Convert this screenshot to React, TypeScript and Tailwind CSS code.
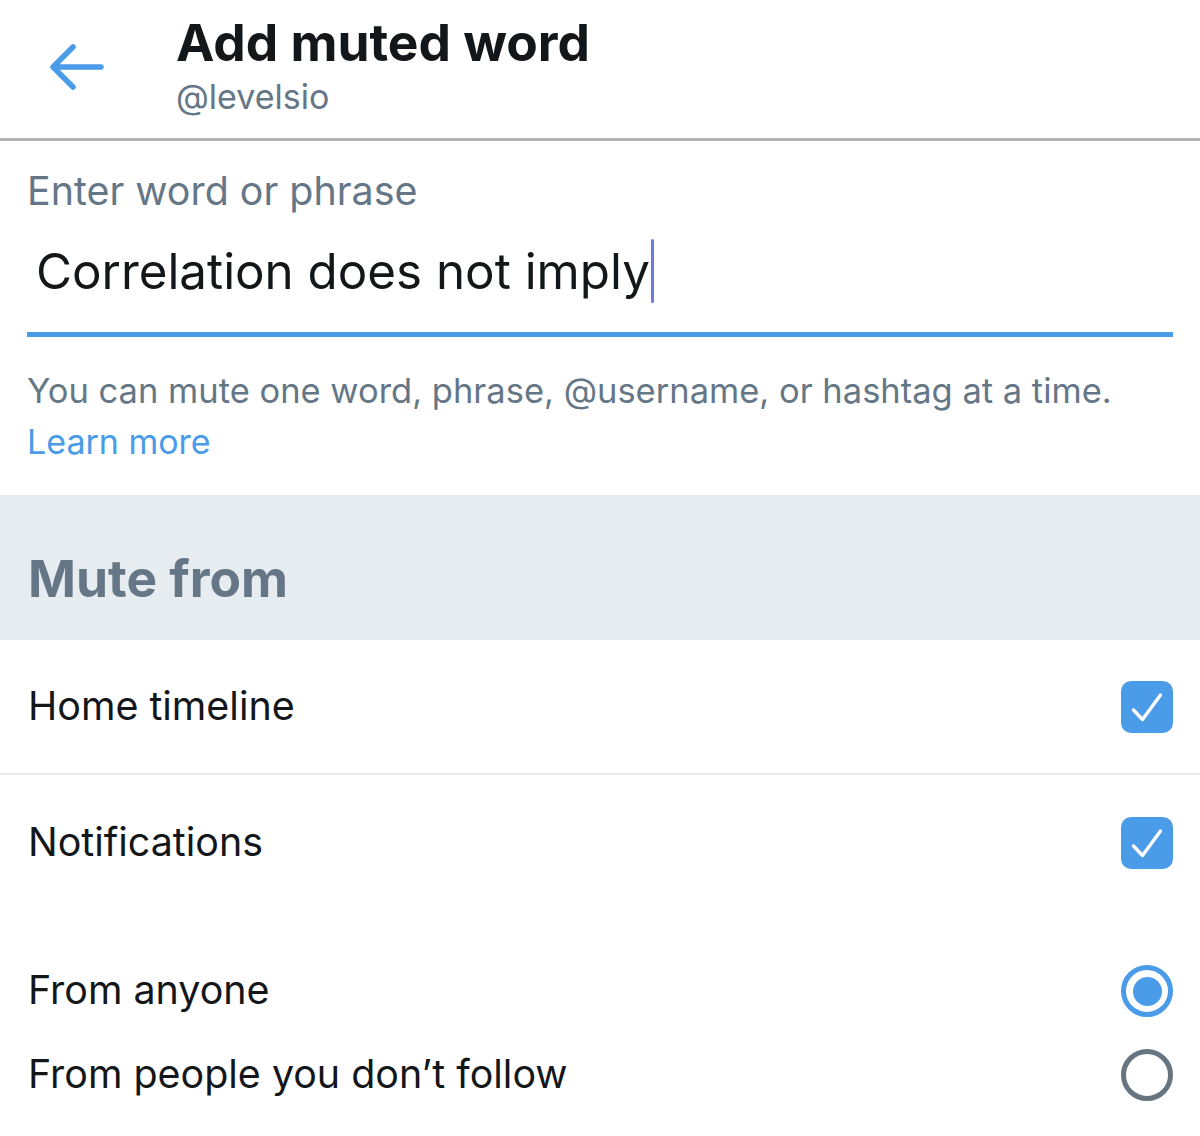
function BackArrow() {
  return (
    <svg viewBox="0 0 60 50" className="h-[50px] w-[60px]" fill="none">
      <path d="M6 25 H54 M26 5 L6 25 L26 45" stroke="#4a9be8" strokeWidth="5.5" strokeLinecap="round" strokeLinejoin="round" />
    </svg>
  );
}

function Checkbox() {
  return (
    <div className="flex h-[52px] w-[52px] items-center justify-center rounded-[10px] bg-[#4a9be8]">
      <svg viewBox="0 0 52 52" className="h-[52px] w-[52px]" fill="none">
        <path d="M12.5 29 L21.5 38.5 L39.5 14" stroke="#ffffff" strokeWidth="3.4" strokeLinecap="round" strokeLinejoin="round" />
      </svg>
    </div>
  );
}

function Radio({ checked }: { checked: boolean }) {
  if (checked) {
    return (
      <div className="flex h-[52px] w-[52px] items-center justify-center rounded-full border-[5px] border-[#4a9be8]">
        <div className="h-[29px] w-[29px] rounded-full bg-[#4a9be8]" />
      </div>
    );
  }
  return <div className="h-[52px] w-[52px] rounded-full border-[5px] border-[#66757f]" />;
}

export default function App() {
  return (
    <div className="h-[1136px] w-[1200px] overflow-hidden bg-white font-['Inter',sans-serif] text-[#14171a]">
      {/* Header */}
      <div className="flex h-[141px] items-start border-b-[3px] border-[#b3b3b3]">
        <div className="flex w-[176px] pl-[47px] pt-[42px]">
          <BackArrow />
        </div>
        <div className="flex flex-col pt-[10px]">
          <span className="text-[51.5px] font-bold leading-[64px]">Add muted word</span>
          <span className="text-[34px] leading-[46px] text-[#657786]">@levelsio</span>
        </div>
      </div>

      {/* Input */}
      <div className="px-[27px] pt-[26px]">
        <div className="text-[39.4px] leading-[48px] text-[#657786]">Enter word or phrase</div>
        <div className="flex h-[122px] items-center border-b-[5px] border-[#4a9be8] pl-[9px] pb-[6px]">
          <span className="text-[49.3px] leading-[64px]">Correlation does not imply</span>
          <span className="ml-[1px] h-[64px] w-[3px] rounded-full bg-[#6b7be0]" />
        </div>
        <div className="pt-[27px] text-[34.5px] leading-[53px] text-[#657786]">
          You can mute one word, phrase, @username, or hashtag at a time.
        </div>
        <div className="pb-[28px] text-[34px] leading-[50px] text-[#4a9be8]">Learn more</div>
      </div>

      {/* Section header */}
      <div className="flex h-[145px] items-end bg-[#e6ecf0] px-[28px] pb-[32px]">
        <span className="text-[51.5px] font-bold leading-[60px] text-[#657786]">Mute from</span>
      </div>

      {/* Rows */}
      <div className="flex h-[135px] items-center justify-between border-b-[2px] border-[#e6ecf0] pl-[28px] pr-[27px]">
        <span className="text-[39.4px]">Home timeline</span>
        <Checkbox />
      </div>
      <div className="flex h-[136px] items-center justify-between pl-[28px] pr-[27px]">
        <span className="text-[39.4px]">Notifications</span>
        <Checkbox />
      </div>
      <div className="h-[38px]" />
      <div className="flex h-[84px] items-center justify-between pl-[28px] pr-[27px]">
        <span className="text-[39.4px]">From anyone</span>
        <Radio checked />
      </div>
      <div className="flex h-[84px] items-center justify-between pl-[28px] pr-[27px]">
        <span className="text-[39.4px]">From people you don’t follow</span>
        <Radio checked={false} />
      </div>
    </div>
  );
}
